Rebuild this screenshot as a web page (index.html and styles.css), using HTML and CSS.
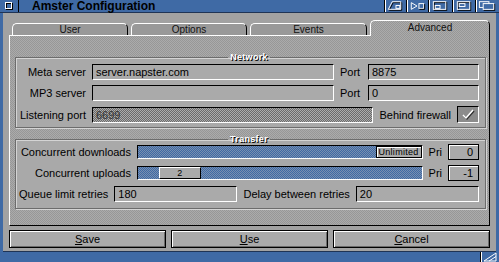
FILE: index.html
```html
<!DOCTYPE html>
<html lang="en">
<head>
  <meta charset="UTF-8" />
  <title>Amster Configuration</title>
  <link rel="stylesheet" href="styles.css">
</head>
<body>
  <div class="window">
    <div class="titlebar">
      <div class="gadget close">
        <svg width="18" height="12" viewBox="0 0 18 12">
          <rect x="6.5" y="3.5" width="6" height="6" fill="none" stroke="#000" />
          <rect x="5.5" y="2.5" width="6" height="6" fill="none" stroke="#fff" />
        </svg>
      </div>
      <div class="title">Amster Configuration</div>
      <div class="gadgets">
        <div class="gadget g22">
          <svg width="22" height="12" viewBox="0 0 22 12">
            <path d="M4.5 10.5 L8.5 2.5 H17.5 V10.5 Z" fill="none" stroke="#000" />
            <path d="M3.5 9.5 L7.5 1.5 H16.5 V9.5 Z" fill="none" stroke="#fff" />
            <rect x="11.5" y="5.5" width="4" height="3" fill="none" stroke="#fff" />
          </svg>
        </div>
        <div class="gadget g22">
          <svg width="22" height="12" viewBox="0 0 22 12">
            <path d="M4.5 2.5 L10.5 6 L4.5 9.5 Z" fill="none" stroke="#fff" />
            <rect x="12.5" y="3.5" width="5" height="5" fill="none" stroke="#fff" />
            <path d="M13 9.5 H18.5 V4" fill="none" stroke="#000" />
          </svg>
        </div>
        <div class="gadget g24">
          <svg width="24" height="12" viewBox="0 0 24 12">
            <rect x="5.5" y="2.5" width="13" height="8" fill="none" stroke="#000" />
            <rect x="4.5" y="1.5" width="13" height="8" fill="none" stroke="#fff" />
            <rect x="6.5" y="5.5" width="5" height="3" fill="none" stroke="#fff" />
          </svg>
        </div>
        <div class="gadget g23">
          <svg width="23" height="12" viewBox="0 0 23 12">
            <rect x="5.5" y="2.5" width="13" height="8" fill="none" stroke="#000" />
            <rect x="4.5" y="1.5" width="13" height="8" fill="none" stroke="#fff" />
            <rect x="6.5" y="3.5" width="6" height="3" fill="none" stroke="#fff" />
          </svg>
        </div>
        <div class="gadget g24">
          <svg width="24" height="12" viewBox="0 0 24 12">
            <rect x="3.5" y="1.5" width="10" height="6" fill="none" stroke="#fff" />
            <rect x="8.5" y="4.5" width="11" height="6" fill="#3f6aa5" stroke="#000" />
            <rect x="7.5" y="3.5" width="11" height="6" fill="#3f6aa5" stroke="#fff" />
          </svg>
        </div>
      </div>
    </div>

    <div class="body">
      <div class="tabs">
        <div class="tab">User</div>
        <div class="tab">Options</div>
        <div class="tab wide">Events</div>
        <div class="tab active">Advanced</div>
      </div>

      <div class="panel">
        <fieldset class="group network">
          <legend>Network</legend>
          <div class="rows">
            <div class="row">
              <label class="lbl net">Meta server</label>
              <div class="input grow">server.napster.com</div>
              <label class="lbl port-lbl">Port</label>
              <div class="input port">8875</div>
            </div>
            <div class="row">
              <label class="lbl net">MP3 server</label>
              <div class="input grow"></div>
              <label class="lbl port-lbl">Port</label>
              <div class="input port">0</div>
            </div>
            <div class="row tall">
              <label class="lbl net">Listening port</label>
              <div class="input grow ghost">6699</div>
              <label class="lbl">Behind firewall</label>
              <div class="check">
                <svg width="20" height="15" viewBox="0 0 20 15">
                  <path d="M5 8 L8 11 L15 3" fill="none" stroke="#333" stroke-width="1.5" transform="translate(1 1)" />
                  <path d="M5 8 L8 11 L15 3" fill="none" stroke="#fff" stroke-width="1.5" />
                </svg>
              </div>
            </div>
          </div>
        </fieldset>

        <fieldset class="group transfer">
          <legend>Transfer</legend>
          <div class="rows">
            <div class="row">
              <label class="lbl xfer">Concurrent downloads</label>
              <div class="slider">
                <div class="knob end">Unlimited</div>
              </div>
              <label class="lbl">Pri</label>
              <div class="input pri">0</div>
            </div>
            <div class="row">
              <label class="lbl xfer">Concurrent uploads</label>
              <div class="slider">
                <div class="knob" style="margin-left: 21px">2</div>
              </div>
              <label class="lbl">Pri</label>
              <div class="input pri">-1</div>
            </div>
            <div class="row">
              <label class="lbl">Queue limit retries</label>
              <div class="input grow">180</div>
              <label class="lbl">Delay between retries</label>
              <div class="input grow">20</div>
            </div>
          </div>
        </fieldset>
      </div>

      <div class="buttons">
        <div class="btn"><u>S</u>ave</div>
        <div class="btn"><u>U</u>se</div>
        <div class="btn"><u>C</u>ancel</div>
      </div>
    </div>

    <div class="bottombar">
      <div class="sizer">
        <svg width="18" height="10" viewBox="0 0 18 10">
          <path d="M3 9 L15 1 V9 Z" fill="none" stroke="#fff" />
          <path d="M8 9 L15 4.5" stroke="#fff" />
        </svg>
      </div>
    </div>
  </div>
</body>
</html>
```

FILE: styles.css
```css
* {
  box-sizing: border-box;
}

body {
  margin: 0;
  width: 499px;
  height: 262px;
  overflow: hidden;
  font-family: "Liberation Sans", Arial, sans-serif;
  font-size: 11px;
  color: #000;
  background: #3f6aa5;
}

.window {
  height: 262px;
  display: flex;
  flex-direction: column;
  background: #3f6aa5;
}

/* title bar */
.titlebar {
  height: 13px;
  display: flex;
  border-bottom: 1px solid #1f3455;
}

.gadget {
  display: flex;
  align-items: center;
  justify-content: center;
}

.close {
  width: 19px;
  border-right: 1px solid #000;
}

.title {
  flex: 1;
  padding-left: 13px;
  font-weight: bold;
  font-size: 12px;
  line-height: 12px;
  color: #000;
}

.gadgets {
  display: flex;
}

.gadgets .gadget {
  border-left: 1px solid #000;
  box-shadow: inset 1px 0 #fff;
}

.g22 { width: 22px; }
.g23 { width: 23px; }
.g24 { width: 24px; }

/* window body */
.body {
  flex: 1;
  margin: 0 3px;
  padding: 7px 6px 3px 6px;
  background: #a2a2a2;
  border-bottom: 1px solid #1f3455;
  display: flex;
  flex-direction: column;
}

.tabs {
  display: flex;
  align-items: flex-end;
  gap: 3px;
  height: 15px;
  padding-left: 3px;
}

.tab {
  width: 116px;
  height: 12px;
  background: #999;
  border: 1px solid;
  border-color: #fff #000 transparent #fff;
  border-bottom: none;
  border-radius: 5px 5px 0 0;
  text-align: center;
  font-size: 10px;
  line-height: 11px;
  color: #111;
}

.tab.wide {
  width: 117px;
}

.tab.active {
  width: 120px;
  height: 16px;
  margin-bottom: -1px;
  position: relative;
  line-height: 13px;
  background: repeating-conic-gradient(#ababab 0 25%, #979797 0 50%) 0 0 / 2px 2px;
}

.panel {
  height: 191px;
  border: 1px solid;
  border-color: #fff #000 #000 #fff;
  background: repeating-conic-gradient(#ababab 0 25%, #979797 0 50%) 0 0 / 2px 2px;
  padding: 0 3px 0 5px;
  display: flex;
  flex-direction: column;
}

/* groups */
.group {
  margin: 0;
  min-width: 0;
  border: 1px solid #6c6c6c;
  box-shadow: inset 1px 1px #d4d4d4, 1px 1px #d4d4d4;
  background: #a9a9a9;
  padding: 2px 6px 4px 3px;
}

.group.network {
  margin-top: 16px;
}

.group.transfer {
  margin-top: 6px;
  padding-top: 0;
  padding-bottom: 6px;
}

.group legend {
  margin: 0 auto;
  padding: 0 2px;
  font-size: 9px;
  font-weight: bold;
  line-height: 10px;
  color: #fff;
  text-shadow: 1px 1px 0 #000;
  letter-spacing: 0.3px;
}

.rows {
  display: flex;
  flex-direction: column;
  gap: 5px;
}

.row {
  display: flex;
  align-items: center;
  gap: 6px;
  height: 16px;
}

.row.tall {
  height: 17px;
}

.lbl {
  white-space: nowrap;
}

.lbl.net {
  width: 67px;
  text-align: right;
}

.lbl.xfer {
  width: 112px;
  text-align: right;
}

.lbl.port-lbl {
  width: 22px;
}

.input {
  height: 16px;
  border: 1px solid;
  border-color: #000 #fff #fff #000;
  background: #aaa;
  padding-left: 3px;
  line-height: 14px;
  white-space: nowrap;
  overflow: hidden;
}

.grow {
  flex: 1;
}

.port {
  width: 111px;
}

.ghost {
  background: repeating-conic-gradient(#acacac 0 25%, #6a6a6a 0 50%) 0 0 / 2px 2px;
  color: #333;
}

.pri {
  width: 31px;
  text-align: right;
  padding: 0 5px 0 0;
  border-color: #000;
  box-shadow: inset 1px 1px #fff;
}

.check {
  width: 22px;
  height: 17px;
  border: 1px solid;
  border-color: #000 #fff #fff #000;
  background: #8c8c8c;
}

.check svg {
  display: block;
}

.slider {
  flex: 1;
  height: 14px;
  border: 1px solid;
  border-color: #000 #fff #fff #000;
  background: repeating-conic-gradient(#3f6aa5 0 25%, #7a90b0 0 50%) 0 0 / 2px 2px;
  display: flex;
}

.knob {
  width: 42px;
  height: 12px;
  background: #aaa;
  border: 1px solid;
  border-color: #fff #000 #000 #fff;
  font-size: 9px;
  line-height: 10px;
  text-align: center;
  letter-spacing: 0.3px;
}

.knob.end {
  width: 46px;
  margin-left: auto;
  border-color: #000;
  box-shadow: inset 1px 1px #fff;
}

/* buttons */
.buttons {
  display: flex;
  gap: 5px;
  margin-top: 4px;
  height: 18px;
}

.btn {
  flex: 1;
  border: 1px solid #000;
  box-shadow: inset 1px 1px #fff, inset -1px -1px #6a6a6a;
  background: #aaa;
  text-align: center;
  line-height: 16px;
}

.btn u {
  text-decoration-thickness: 1px;
  text-underline-offset: 1px;
}

/* bottom border */
.bottombar {
  height: 10px;
  display: flex;
  justify-content: flex-end;
}

.sizer {
  width: 19px;
  border-left: 1px solid #000;
  box-shadow: inset 1px 0 #fff;
  display: flex;
  align-items: center;
  justify-content: center;
}
```
